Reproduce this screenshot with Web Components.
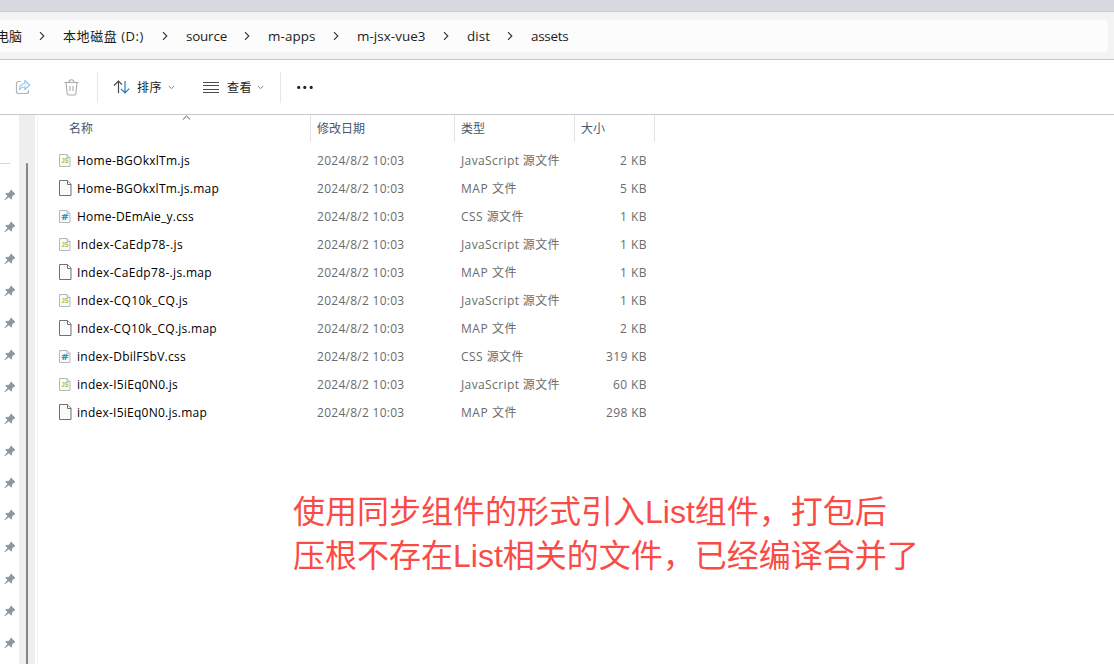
<!DOCTYPE html>
<html lang="zh-CN">
<head>
<meta charset="utf-8">
<title>assets</title>
<style>
body{margin:0;width:1114px;height:664px;overflow:hidden;background:#fff;font-family:"Open Sans","Noto Sans CJK SC",sans-serif}
</style>
</head>
<body>
<file-explorer></file-explorer>
<script>
const define = (name, html, setup) => customElements.define(name, class extends HTMLElement {
  connectedCallback() {
    if (this.shadowRoot) return;
    const root = this.attachShadow({mode: 'open'});
    root.innerHTML = typeof html === 'function' ? html(this) : html;
    if (setup) setup(this, root);
  }
});

/* A single-line label whose letter spacing is adjusted to fill a given width. */
define('fit-label', `<style>
:host{display:block;white-space:nowrap;flex:none}
span{display:inline-block}
</style><span><slot></slot></span>`, (el, root) => {
  const w = +el.getAttribute('w');
  if (!w) return;
  const span = root.querySelector('span');
  const natural = span.getBoundingClientRect().width;
  el.style.width = w + 'px';
  span.style.letterSpacing = (w - natural) / [...el.textContent].length + 'px';
});

define('path-crumb', el => `<style>
:host{display:flex;align-items:center;height:32px;font-size:13.4px;color:#1b1b1b;flex:none}
svg{flex:none;margin-left:${el.getAttribute('gap')}px;margin-right:${el.getAttribute('after')}px}
fit-label{line-height:18px;${el.hasAttribute('cjk') ? 'font-size:13px' : ''}}
</style><fit-label w="${el.getAttribute('w')}">${el.getAttribute('label')}</fit-label>
${el.hasAttribute('last') ? '' : '<svg width="6" height="10" viewBox="0 0 6 10" fill="none" stroke="#333" stroke-width="1.15"><path d="M1 1.2 4.8 5 1 8.8"/></svg>'}`);

define('address-bar', `<style>
:host{display:block;height:60px;box-sizing:border-box;background:#f3f3f4;border-top:11px solid #d9dadf;border-bottom:1px solid #c7c7cc}
.in{border-top:1px solid #c9c9cf;padding-top:8px}
.box{display:flex;width:1108px;height:32px;background:#fcfcfc;border-radius:0 5px 5px 0;overflow:hidden}
.box path-crumb:first-child{margin-left:-4px}
</style><div class="in"><div class="box">
<path-crumb cjk label="电脑" w="26" gap="17" after="18"></path-crumb>
<path-crumb cjk label="本地磁盘 (D:)" w="81" gap="18" after="18"></path-crumb>
<path-crumb label="source" w="41" gap="17" after="18"></path-crumb>
<path-crumb label="m-apps" w="47.5" gap="17" after="18.5"></path-crumb>
<path-crumb label="m-jsx-vue3" w="68.5" gap="17.5" after="18"></path-crumb>
<path-crumb label="dist" w="23" gap="17" after="18"></path-crumb>
<path-crumb label="assets" w="37.5" last></path-crumb>
</div></div>`);

define('tool-bar', `<style>
:host{display:flex;align-items:center;height:55px;box-sizing:border-box;border-bottom:1px solid #c7c7cc;font-size:12px;color:#1b1b1b;background:#fff}
svg{flex:none;display:block}
i{flex:none;width:1px;height:31px;background:#e6e6e6}
.share{margin-left:15px}.bin{margin-left:33px}.bin+i{margin-left:18px}
.sort{margin:0 7px 0 15px}.list{margin:0 8px 0 28px}
.v{margin-left:6px}.list~.v{margin-left:5px}.v+i{margin-left:16px}.dots{margin-left:16px}
</style>
<svg class="share" width="16" height="16" viewBox="0 0 16 16" fill="none"><path d="M6 2.5H3.5a2 2 0 0 0-2 2v8a2 2 0 0 0 2 2h8a2 2 0 0 0 2-2V11" stroke="#b4b4b4" stroke-width="1.2"/><path d="M9.8 1.5 14.7 6l-4.9 4.5V8Q6.6 7.7 4.5 10.6 4.7 4.8 9.8 4.2Z" stroke="#98c6ea" stroke-width="1.15" fill="#eff7fd" stroke-linejoin="round"/></svg>
<svg class="bin" width="15" height="17" viewBox="0 0 15 17" fill="none" stroke="#aaa" stroke-width="1.1"><path d="M.5 3.5h14M2 3.5l1.2 11.2q.2 1.3 1.5 1.3h5.6q1.3 0 1.5-1.3L13 3.5M5 3.3a2.5 2.5 0 0 1 5 0M6 7v5M9 7v5"/></svg>
<i></i>
<svg class="sort" width="17" height="14" viewBox="0 0 17 14" fill="none" stroke-width="1.15"><path d="M5.5 13V1.2M1 5.5l4.5-4.4L9 4.7" stroke="#444"/><path d="M12 1v11.8M7.9 8.8l4.1 4.1 4.2-4.2" stroke="#1778c8"/></svg>
<fit-label w="25">排序</fit-label>
<svg class="v" width="7" height="5" viewBox="0 0 7 5" fill="none" stroke="#808080"><path d="m.8 1 2.7 2.6L6.2 1"/></svg>
<svg class="list" width="16" height="11" viewBox="0 0 16 11"><path d="M0 .5h16M0 3.5h16M0 7.5h16M0 10.5h16" stroke="#4c4c4c"/></svg>
<fit-label w="25">查看</fit-label>
<svg class="v" width="7" height="5" viewBox="0 0 7 5" fill="none" stroke="#808080"><path d="m.8 1 2.7 2.6L6.2 1"/></svg>
<i></i>
<svg class="dots" width="17" height="4" viewBox="0 0 17 4" fill="#222"><circle cx="1.7" cy="2.4" r="1.55"/><circle cx="7.8" cy="2.4" r="1.55"/><circle cx="14.2" cy="2.4" r="1.55"/></svg>`);

define('pin-icon', `<style>:host{display:block;height:32px;padding:10px 0 0 4px;box-sizing:border-box}svg{display:block}</style>
<svg width="12" height="12" viewBox="0 0 12 12" fill="#8b989f"><path d="M6.9.6 11.4 4.9 10.5 5.8 9.9 5.7 8.1 7.6 8 9.9 7.2 10.6 4.9 8.3.9 11.2.4 10.8 3.4 7 1.3 4.8 2.1 4 4.5 3.9 6.3 2 6.2 1.3Z"/></svg>`);

define('nav-pane', `<style>
:host{display:grid;grid-template-columns:19px 16px 2px 1px;height:549px;flex:none}
.line{width:10px;height:1px;margin:48px 0 15px;background:#d5d5d5}
.pins{overflow:hidden}
.bar{background:#eee;padding:48px 0 0 7px}
.thumb{width:2px;height:501px;background:#858585;border-radius:1px 1px 0 0}
.edge{grid-column:4;background:#f3f3f3}
</style><div class="pins"><div class="line"></div>${'<pin-icon></pin-icon>'.repeat(15)}</div>
<div class="bar"><div class="thumb"></div></div><div class="edge"></div>`);

const page = '<path d="M.5 1.5h7.5l3 3v9H.5z" fill="#fafafa" stroke="#b3babd"/><path d="M8 1.5v3h3" fill="none" stroke="#b3babd"/>';
const sheet = {
  js: `<svg width="13" height="15" viewBox="0 0 13 15">${page}<text x="2.5" y="10.2" textLength="7" lengthAdjust="spacingAndGlyphs" font-family="Liberation Sans, sans-serif" font-size="6.8" font-weight="700" fill="#b5b92b">JS</text></svg>`,
  css: `<svg width="13" height="15" viewBox="0 0 13 15">${page}<text x="2.2" y="11" textLength="7.2" lengthAdjust="spacingAndGlyphs" font-family="Open Sans, sans-serif" font-size="9.6" font-weight="700" fill="#478ba6">#</text></svg>`,
  map: '<svg width="13" height="17" viewBox="0 0 13 17" fill="#fafafa" stroke="#707070"><path d="M.5.5h8l3.5 3.5v11.5H.5z"/><path d="M8.5.5v4H12"/></svg>'
};

define('file-row', el => {
  const kind = el.getAttribute('kind');
  const [type, w] = {js: ['JavaScript 源文件', 99], css: ['CSS 源文件', 63], map: ['MAP 文件', 56]}[kind];
  return `<style>
:host{display:grid;grid-template-columns:18px 240px 144px 120px 66px;align-items:center;height:28px;padding-left:21px;font-size:12px;color:#6b6b6b}
svg{display:block;width:13px}
.name{color:#000}
.size{justify-self:end}
</style>${sheet[kind]}
<fit-label class="name" w="${el.getAttribute('w')}">${el.getAttribute('name')}</fit-label>
<fit-label w="87.5">2024/8/2 10:03</fit-label>
<fit-label w="${w}">${type}</fit-label>
<fit-label class="size" w="${el.getAttribute('sw')}">${el.getAttribute('size')}</fit-label>`;
});

define('column-head', `<style>
:host{display:grid;grid-template-columns:273px 144px 120px 80px;height:27px;position:relative;font-size:12px;color:#44586f}
div{display:flex;align-items:center;box-sizing:border-box;padding:0 0 2px 6px;border-right:1px solid #e2e2e2}
.first{padding-left:31px}
svg{position:absolute;left:144px;top:0}
</style><div class="first">名称</div><div>修改日期</div><div>类型</div><div>大小</div>
<svg width="9" height="6" viewBox="0 0 9 6" fill="none" stroke="#555"><path d="M.8 4.6 4.5 1l3.7 3.6"/></svg>`);

define('file-list', () => {
  const rows = [
    ['js','Home-BGOkxlTm.js',113,'2 KB',27],['map','Home-BGOkxlTm.js.map',142,'5 KB',27],
    ['css','Home-DEmAie_y.css',117,'1 KB',27],['js','Index-CaEdp78-.js',106,'1 KB',27],
    ['map','Index-CaEdp78-.js.map',135,'1 KB',27],['js','Index-CQ10k_CQ.js',111,'1 KB',27],
    ['map','Index-CQ10k_CQ.js.map',140,'2 KB',27],['css','index-DbilFSbV.css',109,'319 KB',41],
    ['js','index-I5iEq0N0.js',101,'60 KB',34],['map','index-I5iEq0N0.js.map',130,'298 KB',41]];
  return `<style>:host{display:block}.rows{padding-top:4px}</style><column-head></column-head><div class="rows">${
    rows.map(r => `<file-row kind="${r[0]}" name="${r[1]}" w="${r[2]}" size="${r[3]}" sw="${r[4]}"></file-row>`).join('')}</div>`;
});

define('red-note', `<style>
:host{display:block;margin:64px 0 0 255px;font:32px/44px "Liberation Sans","Noto Sans CJK SC",sans-serif;color:#fa4b46;white-space:nowrap}
</style><slot></slot>`);

define('file-explorer', `<style>
:host{display:block;width:1114px;height:664px;overflow:hidden}
main{display:flex;height:549px}
section{flex:1}
</style><address-bar></address-bar><tool-bar></tool-bar>
<main><nav-pane></nav-pane><section><file-list></file-list>
<red-note>使用同步组件的形式引入List组件，打包后<br>压根不存在List相关的文件，已经编译合并了</red-note></section></main>`);
</script>
</body>
</html>
